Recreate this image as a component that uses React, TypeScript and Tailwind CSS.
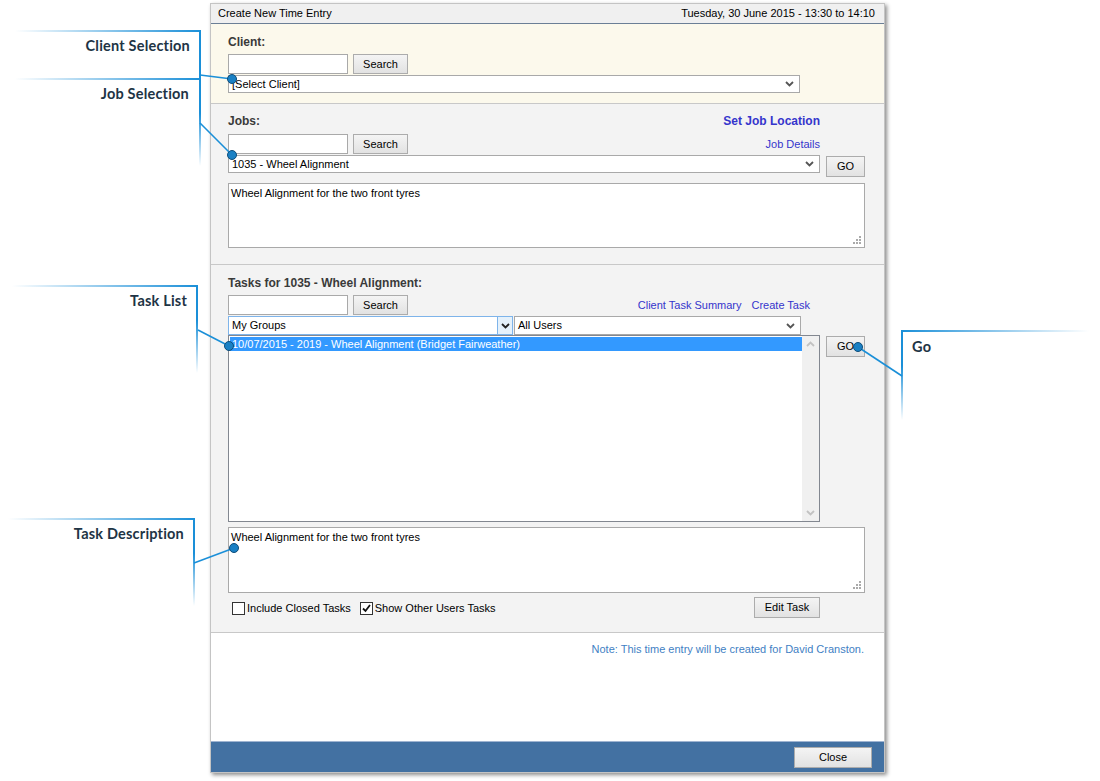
import type { ReactNode } from "react";

function Chevron() {
  return (
    <svg width="9" height="6" viewBox="0 0 9 6" className="shrink-0">
      <path d="M1 1 L4.5 4.5 L8 1" fill="none" stroke="#555" strokeWidth="1.8" />
    </svg>
  );
}

function Btn({ children, className = "" }: { children: ReactNode; className?: string }) {
  return (
    <div
      className={
        "flex items-center justify-center border border-[#acacac] bg-linear-to-b from-[#f4f4f4] to-[#e2e2e2] text-[11px] text-black " +
        className
      }
    >
      {children}
    </div>
  );
}

function Select({ text, className = "" }: { text: string; className?: string }) {
  return (
    <div
      className={
        "flex items-center border border-[#a9a9a9] bg-white pl-[3px] pr-[5px] text-[11px] text-black " +
        className
      }
    >
      <span className="flex-1">{text}</span>
      <Chevron />
    </div>
  );
}

function Grip() {
  return (
    <svg width="8" height="8" viewBox="0 0 8 8" className="absolute right-[3px] bottom-[3px]">
      <rect x="6" y="0" width="2" height="2" fill="#aaa" />
      <rect x="3" y="3" width="2" height="2" fill="#aaa" />
      <rect x="6" y="3" width="2" height="2" fill="#aaa" />
      <rect x="0" y="6" width="2" height="2" fill="#aaa" />
      <rect x="3" y="6" width="2" height="2" fill="#aaa" />
      <rect x="6" y="6" width="2" height="2" fill="#aaa" />
    </svg>
  );
}

function TextArea({ text, className = "" }: { text: string; className?: string }) {
  return (
    <div
      className={
        "relative w-[637px] border border-[#a9a9a9] bg-white px-[2px] pt-[1px] text-[11px] text-black " + className
      }
    >
      {text}
      <Grip />
    </div>
  );
}

function Callouts() {
  const blue = "#1a8fd8";
  return (
    <svg width="1100" height="781" className="pointer-events-none absolute left-0 top-0">
      <defs>
        <linearGradient id="hl" x1="0" x2="1" y1="0" y2="0">
          <stop offset="0" stopColor={blue} stopOpacity="0" />
          <stop offset="1" stopColor={blue} stopOpacity="1" />
        </linearGradient>
        <linearGradient id="hr" x1="0" x2="1" y1="0" y2="0">
          <stop offset="0" stopColor={blue} stopOpacity="1" />
          <stop offset="1" stopColor={blue} stopOpacity="0" />
        </linearGradient>
        <linearGradient id="vd" x1="0" x2="0" y1="0" y2="1">
          <stop offset="0" stopColor={blue} stopOpacity="1" />
          <stop offset="0.4" stopColor={blue} stopOpacity="1" />
          <stop offset="1" stopColor={blue} stopOpacity="0" />
        </linearGradient>
      </defs>

      {/* client selection */}
      <rect x="15" y="30" width="186" height="2" fill="url(#hl)" />
      <rect x="199" y="30" width="2" height="49" fill={blue} />
      <line x1="200" y1="75" x2="232" y2="79" stroke={blue} strokeWidth="1.6" />

      {/* job selection */}
      <rect x="15" y="78" width="186" height="2" fill="url(#hl)" />
      <rect x="199" y="78" width="2" height="88" fill="url(#vd)" />
      <line x1="200" y1="123" x2="232" y2="155" stroke={blue} strokeWidth="1.6" />

      {/* task list */}
      <rect x="12" y="285" width="186" height="2" fill="url(#hl)" />
      <rect x="196" y="285" width="2" height="88" fill="url(#vd)" />
      <line x1="198" y1="330" x2="229" y2="346" stroke={blue} strokeWidth="1.6" />

      {/* task description */}
      <rect x="8" y="518" width="187" height="2" fill="url(#hl)" />
      <rect x="193" y="518" width="2" height="88" fill="url(#vd)" />
      <line x1="194" y1="563" x2="234" y2="548" stroke={blue} strokeWidth="1.6" />

      {/* go */}
      <rect x="901" y="330" width="188" height="2" fill="url(#hr)" />
      <rect x="901" y="330" width="2" height="90" fill="url(#vd)" />
      <line x1="858" y1="347" x2="902" y2="376" stroke={blue} strokeWidth="1.6" />

      <circle cx="232" cy="79" r="4.5" fill="#1a80c4" stroke="#0e4d7a" strokeWidth="1" />
      <circle cx="232" cy="155" r="4.5" fill="#1a80c4" stroke="#0e4d7a" strokeWidth="1" />
      <circle cx="229" cy="346" r="4.5" fill="#1a80c4" stroke="#0e4d7a" strokeWidth="1" />
      <circle cx="234" cy="548" r="4.5" fill="#1a80c4" stroke="#0e4d7a" strokeWidth="1" />
      <circle cx="858" cy="347" r="4.5" fill="#1a80c4" stroke="#0e4d7a" strokeWidth="1" />
    </svg>
  );
}

function CalloutLabels() {
  const cls =
    "absolute text-right font-['Lato',sans-serif] text-[14.5px] tracking-[0.2px] font-bold text-[#1e3445]";
  return (
    <>
      <div className={cls + " left-0 top-[35px] w-[190px]"}>Client Selection</div>
      <div className={cls + " left-0 top-[83px] w-[189px]"}>Job Selection</div>
      <div className={cls + " left-0 top-[290px] w-[187px]"}>Task List</div>
      <div className={cls + " left-0 top-[523px] w-[184px]"}>Task Description</div>
      <div className="absolute left-[912px] top-[336px] font-['Lato',sans-serif] text-[14.5px] tracking-[0.2px] font-bold text-[#1e3445]">
        Go
      </div>
    </>
  );
}

function Checkbox({ checked }: { checked?: boolean }) {
  return (
    <div className="flex h-[13px] w-[13px] items-center justify-center border border-[#333] bg-white">
      {checked && (
        <svg width="9" height="9" viewBox="0 0 9 9">
          <path d="M1 4.5 L3.5 7 L8 1" fill="none" stroke="#111" strokeWidth="1.8" />
        </svg>
      )}
    </div>
  );
}

export default function App() {
  return (
    <div className="relative h-[781px] w-[1100px] overflow-hidden bg-white font-['Liberation_Sans',Arial,sans-serif]">
      <div className="flex pl-[210px] pt-[3px]">
        <div className="flex h-[770px] w-[675px] flex-col border border-[#c4c4c4] bg-white shadow-[2px_2px_4px_rgba(0,0,0,0.45)]">
          {/* header */}
          <div className="flex h-[20px] items-center justify-between border-b border-[#6b7f96] bg-[#f0f0f0] pl-[7px] pr-[9px] text-[11px] text-black">
            <span>Create New Time Entry</span>
            <span>Tuesday, 30 June 2015 - 13:30 to 14:10</span>
          </div>

          {/* client */}
          <div className="h-[80px] border-b border-[#c8c8c8] bg-[#fcf9ec] pl-[17px] pt-[9px]">
            <div className="h-[16px] text-[12px] font-bold text-[#3a3a3a]">Client:</div>
            <div className="mt-[5px] flex items-center">
              <div className="h-[20px] w-[120px] border border-[#a9a9a9] bg-white" />
              <Btn className="ml-[5px] h-[20px] w-[55px]">Search</Btn>
            </div>
            <Select text="[Select Client]" className="mt-[1px] h-[18px] w-[572px]" />
          </div>

          {/* jobs */}
          <div className="h-[161px] border-b border-[#c8c8c8] bg-[#f3f3f3] pl-[17px] pt-[9px]">
            <div className="flex h-[16px] w-[592px] items-center justify-between text-[12px] font-bold">
              <span className="text-[#3a3a3a]">Jobs:</span>
              <span className="text-[#3535cc]">Set Job Location</span>
            </div>
            <div className="mt-[5px] flex w-[592px] items-center">
              <div className="h-[20px] w-[120px] border border-[#a9a9a9] bg-white" />
              <Btn className="ml-[5px] h-[20px] w-[55px]">Search</Btn>
              <span className="ml-auto text-[11px] text-[#3535cc]">Job Details</span>
            </div>
            <div className="mt-[1px] flex items-start">
              <Select text="1035 - Wheel Alignment" className="h-[18px] w-[592px]" />
              <Btn className="ml-[6px] mt-[1px] h-[21px] w-[39px]">GO</Btn>
            </div>
            <TextArea text="Wheel Alignment for the two front tyres" className="mt-[6px] h-[65px]" />
          </div>

          {/* tasks */}
          <div className="h-[368px] border-b border-[#c8c8c8] bg-[#f3f3f3] pl-[17px] pt-[9px]">
            <div className="h-[16px] text-[12px] font-bold text-[#3a3a3a]">Tasks for 1035 - Wheel Alignment:</div>
            <div className="mt-[5px] flex w-[592px] items-center">
              <div className="h-[20px] w-[120px] border border-[#a9a9a9] bg-white" />
              <Btn className="ml-[5px] h-[20px] w-[55px]">Search</Btn>
              <div className="ml-auto flex gap-[10px] pr-[10px] text-[11px] text-[#3535cc]">
                <span>Client Task Summary</span>
                <span>Create Task</span>
              </div>
            </div>
            <div className="mt-[1px] flex">
              <div className="flex h-[19px] w-[285px] items-center border border-[#7eb4ea] bg-white text-[11px] text-black">
                <span className="flex-1 pl-[3px]">My Groups</span>
                <div className="flex h-full w-[15px] items-center justify-center border-l border-[#7eb4ea] bg-[#e5f1fb]">
                  <svg width="9" height="6" viewBox="0 0 9 6">
                    <path d="M1 1 L4.5 4.5 L8 1" fill="none" stroke="#222" strokeWidth="1.8" />
                  </svg>
                </div>
              </div>
              <Select text="All Users" className="ml-[1px] h-[19px] w-[287px]" />
            </div>
            <div className="flex items-start">
              <div className="flex h-[187px] w-[592px] border border-[#828790] bg-white">
                <div className="flex-1 pl-[1px] pt-[1px]">
                  <div className="flex h-[14px] items-center bg-[#3399ff] pl-[2px] text-[11px] text-white">
                    10/07/2015 - 2019 - Wheel Alignment (Bridget Fairweather)
                  </div>
                </div>
                <div className="flex w-[17px] flex-col items-center justify-between bg-[#f0f0f0] py-[5px]">
                  <svg width="9" height="6" viewBox="0 0 9 6">
                    <path d="M1 5 L4.5 1.5 L8 5" fill="none" stroke="#c2c2c2" strokeWidth="1.8" />
                  </svg>
                  <svg width="9" height="6" viewBox="0 0 9 6">
                    <path d="M1 1 L4.5 4.5 L8 1" fill="none" stroke="#c2c2c2" strokeWidth="1.8" />
                  </svg>
                </div>
              </div>
              <Btn className="ml-[6px] mt-[1px] h-[21px] w-[39px]">GO</Btn>
            </div>
            <TextArea text="Wheel Alignment for the two front tyres" className="mt-[5px] h-[66px]" />
            <div className="mt-[4px] flex w-[592px] items-center">
              <div className="ml-[4px] mt-[1px] flex items-center text-[11px] text-black">
                <Checkbox />
                <span className="ml-[2px]">Include Closed Tasks</span>
                <div className="ml-[9px]">
                  <Checkbox checked />
                </div>
                <span className="ml-[2px]">Show Other Users Tasks</span>
              </div>
              <Btn className="ml-auto h-[21px] w-[66px]">Edit Task</Btn>
            </div>
          </div>

          {/* note */}
          <div className="flex-1 bg-white pr-[20px] pt-[8px] text-right text-[11px] text-[#3f7fc4]">
            Note: This time entry will be created for David Cranston.
          </div>

          {/* footer */}
          <div className="flex h-[31px] items-center justify-end border-t border-[#9fb4d1] bg-[#4371a2] pr-[12px]">
            <Btn className="h-[21px] w-[78px]">Close</Btn>
          </div>
        </div>
      </div>

      <Callouts />
      <CalloutLabels />
    </div>
  );
}
